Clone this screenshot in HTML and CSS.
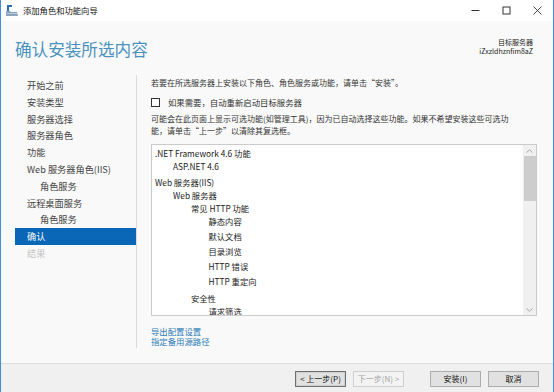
FILE: index.html
```html
<!DOCTYPE html>
<html lang="zh-CN">
<head>
    <meta charset="UTF-8">
    <title>添加角色和功能向导</title>
    <link rel="stylesheet" href="styles.css">
</head>
<body>
<div class="window">
    <!-- Title bar -->
    <div class="titlebar">
        <svg class="app-icon" viewBox="0 0 12 11" width="12" height="11">
            <rect x="1" y="0" width="2" height="6" fill="#2d6cb5"></rect>
            <rect x="1" y="0" width="5" height="2" fill="#2d6cb5"></rect>
            <path d="M0 6 L4 6 L5 7 L11 7 L12 11 L0 11 Z" fill="#8aa3be"></path>
            <path d="M1 8 L11 8 L11 9 L1 9 Z" fill="#b9cadb"></path>
        </svg>
        <span class="app-title">添加角色和功能向导</span>
        <div class="controls">
            <span><svg viewBox="0 0 9 9" width="9" height="9"><path d="M0.5 4.5 H8.5" stroke="#333" stroke-width="1"></path></svg></span>
            <span><svg viewBox="0 0 9 9" width="9" height="9"><rect x="1" y="1" width="7" height="7" fill="none" stroke="#333" stroke-width="1"></rect></svg></span>
            <span><svg viewBox="0 0 9 9" width="9" height="9"><path d="M0.5 0.5 L8.5 8.5 M8.5 0.5 L0.5 8.5" stroke="#333" stroke-width="0.9"></path></svg></span>
        </div>
    </div>

    <!-- Header -->
    <div class="header">
        <h1 class="page-title">确认安装所选内容</h1>
        <div class="target">
            <div class="target-label">目标服务器</div>
            <div>iZxzldhznfim8aZ</div>
        </div>
    </div>

    <!-- Main area -->
    <div class="main">
        <ul class="nav">
            <li>开始之前</li>
            <li>安装类型</li>
            <li>服务器选择</li>
            <li>服务器角色</li>
            <li>功能</li>
            <li>Web 服务器角色(IIS)</li>
            <li class="sub">角色服务</li>
            <li>远程桌面服务</li>
            <li class="sub">角色服务</li>
            <li class="current">确认</li>
            <li class="disabled">结果</li>
        </ul>

        <div class="content">
            <p class="lead">若要在所选服务器上安装以下角色、角色服务或功能，请单击“安装”。</p>
            <div class="check-row">
                <span class="checkbox"></span>
                <span class="check-label">如果需要，自动重新启动目标服务器</span>
            </div>
            <p class="note">可能会在此页面上显示可选功能(如管理工具)，因为已自动选择这些功能。如果不希望安装这些可选功<br>能，请单击“上一步”以清除其复选框。</p>

            <div class="list-box">
                <div class="list">
                    <div class="row l0">.NET Framework 4.6 功能</div>
                    <div class="row l1">ASP.NET 4.6</div>
                    <div class="row l0 gap4">Web 服务器(IIS)</div>
                    <div class="row l1">Web 服务器</div>
                    <div class="row l2">常见 HTTP 功能</div>
                    <div class="row l3">静态内容</div>
                    <div class="row l3 gap2">默认文档</div>
                    <div class="row l3 gap2">目录浏览</div>
                    <div class="row l3 gap2">HTTP 错误</div>
                    <div class="row l3 gap2">HTTP 重定向</div>
                    <div class="row l2 gap4">安全性</div>
                    <div class="row l3">请求筛选</div>
                </div>
                <div class="scrollbar">
                    <div class="arrow"><svg viewBox="0 0 7 4" width="7" height="4"><path d="M0.5 3.5 L3.5 0.8 L6.5 3.5" fill="none" stroke="#a6a6a6" stroke-width="1"></path></svg></div>
                    <div class="thumb"></div>
                    <div class="track"></div>
                    <div class="arrow"><svg viewBox="0 0 7 4" width="7" height="4"><path d="M0.5 0.5 L3.5 3.2 L6.5 0.5" fill="none" stroke="#a6a6a6" stroke-width="1"></path></svg></div>
                </div>
            </div>

            <div class="links">
                <a href="#">导出配置设置</a>
                <a href="#">指定备用源路径</a>
            </div>
        </div>
    </div>

    <!-- Footer buttons -->
    <div class="footer">
        <button class="btn focused">&lt; 上一步(P)</button>
        <button class="btn disabled">下一步(N) &gt;</button>
        <button class="btn wide-gap">安装(I)</button>
        <button class="btn">取消</button>
    </div>
</div>
</body>
</html>
```

FILE: styles.css
```css
* {
    box-sizing: border-box;
}
body {
    margin: 0;
    font-family: "Noto Sans CJK SC", "Noto Sans", sans-serif;
    color: #222;
    background: #fff;
}
.window {
    width: 554px;
    height: 392px;
    border-left: 1px solid #3f8fdd;
    border-right: 1px solid #3f8fdd;
    background: #f9f9f9;
    display: flex;
    flex-direction: column;
    overflow: hidden;
}

/* Title bar */
.titlebar {
    height: 21px;
    flex: none;
    display: flex;
    align-items: center;
    background: #fff;
}
.app-icon {
    margin-left: 5px;
    margin-top: -1px;
}
.app-title {
    margin-left: 5px;
    font-size: 8.3px;
    line-height: 21px;
    color: #111;
}
.controls {
    margin-left: auto;
    display: flex;
}
.controls span {
    width: 31px;
    height: 21px;
    display: flex;
    align-items: center;
    justify-content: center;
}

/* Header */
.header {
    height: 54px;
    flex: none;
    display: flex;
    justify-content: space-between;
    padding: 0 20px 0 14px;
}
.page-title {
    margin: 18px 0 0;
    font-size: 16.6px;
    line-height: 20px;
    font-weight: normal;
    color: #4a92be;
}
.target {
    margin-top: 17px;
    text-align: right;
    font-size: 7px;
    line-height: 8.5px;
    color: #222;
}

/* Main */
.main {
    flex: 1;
    display: flex;
    min-height: 0;
}
.nav {
    list-style: none;
    margin: 0 0 0 14px;
    padding: 2px 0 0;
    width: 122px;
    height: 273px;
    border-right: 1px solid #dadada;
}
.nav li {
    height: 16.8px;
    line-height: 16.8px;
    padding-left: 12px;
    font-size: 9.2px;
    color: #444;
    white-space: nowrap;
}
.nav li.sub {
    padding-left: 25px;
}
.nav li.current {
    background: #0a66b6;
    color: #fff;
}
.nav li.disabled {
    color: #c3c3c3;
}

.content {
    margin-left: 14px;
    width: 386px;
    padding-top: 2px;
}
.lead {
    margin: 0;
    font-size: 8px;
    line-height: 12px;
    color: #333;
    white-space: nowrap;
}
.check-row {
    margin-top: 7px;
    height: 12px;
    display: flex;
    align-items: center;
}
.checkbox {
    width: 9px;
    height: 9px;
    border: 1px solid #333;
    background: #fff;
    margin-right: 8px;
}
.check-label {
    font-size: 8.4px;
    line-height: 12px;
    color: #333;
}
.note {
    margin: 5px 0 0;
    font-size: 8px;
    line-height: 11.7px;
    color: #333;
    white-space: nowrap;
}

.list-box {
    margin-top: 8px;
    height: 172px;
    border: 1px solid #cbcbcb;
    background: #fff;
    display: flex;
}
.list {
    flex: 1;
    padding: 1.5px 0 0 3px;
    overflow: hidden;
    font-size: 8.3px;
    color: #1a1a1a;
}
.row {
    line-height: 13px;
    white-space: nowrap;
}
.row.l1 { padding-left: 18px; }
.row.l2 { padding-left: 36px; }
.row.l3 { padding-left: 53.5px; }
.row.gap2 { margin-top: 2px; }
.row.gap4 { margin-top: 3.5px; }

.scrollbar {
    width: 13px;
    display: flex;
    flex-direction: column;
    background: #f0f0f0;
}
.arrow {
    height: 11px;
    display: flex;
    align-items: center;
    justify-content: center;
}
.thumb {
    height: 45px;
    margin: 0 0 0 1px;
    background: #cdcdcd;
}
.track {
    flex: 1;
}

.links {
    margin-top: 9.5px;
    display: flex;
    flex-direction: column;
}
.links a {
    font-size: 8.4px;
    line-height: 10.5px;
    color: #2a7bb8;
    text-decoration: none;
}

/* Footer */
.footer {
    height: 29px;
    flex: none;
    border-top: 1px solid #dcdcdc;
    background: #f0f0f0;
    padding: 7px 14px 0;
    display: flex;
    justify-content: flex-end;
    gap: 7px;
}
.btn {
    width: 51px;
    height: 16px;
    padding: 0;
    border: 1px solid #adadad;
    background: #e1e1e1;
    font-family: "Noto Sans CJK SC", "Noto Sans", sans-serif;
    font-size: 8px;
    line-height: 14px;
    color: #111;
}
.btn.focused {
    border-color: #6f6f6f;
    box-shadow: inset 0 0 0 1px #cfcfcf;
}
.btn.disabled {
    border-color: #cfcfcf;
    background: #f3f3f3;
    color: #a3a3a3;
}
.btn.wide-gap {
    margin-left: 19px;
}
```
